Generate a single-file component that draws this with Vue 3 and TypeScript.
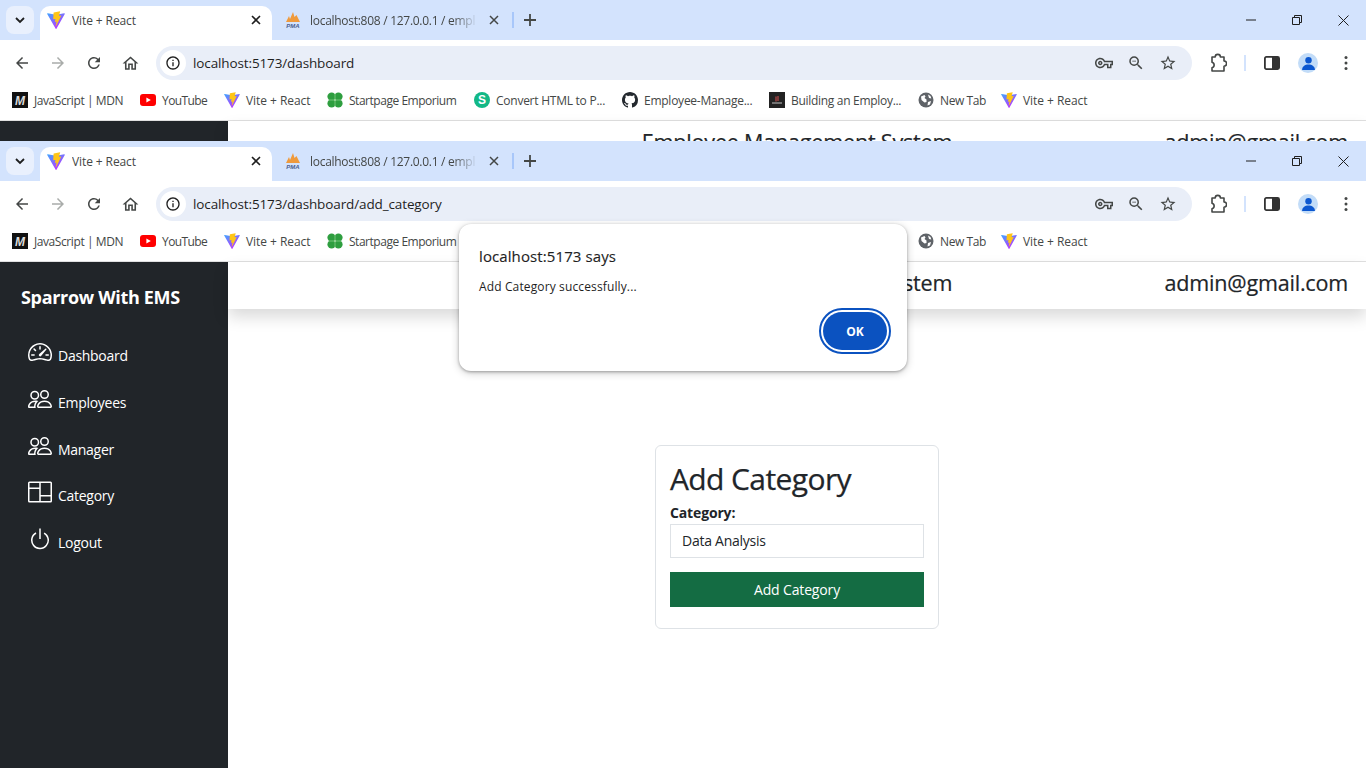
<script setup lang="ts">
const viteIcon = `<defs><linearGradient id="vg" x1="0" y1="0" x2="0.6" y2="1"><stop offset="0" stop-color="#41a5ff"/><stop offset="1" stop-color="#bd34fe"/></linearGradient></defs><path fill="url(#vg)" d="M29.9 6.1 16.7 29.6c-.3.5-1 .5-1.2 0L2.1 6.1c-.3-.5.2-1.2.7-1l13.2 2.3h.2l12.9-2.3c.6-.1 1 .5.8 1Z"/><path fill="#ffc517" d="M22.3 2 12.5 3.9c-.2 0-.3.2-.3.3l-.6 10.1c0 .2.2.4.4.4l2.7-.6c.3 0 .5.2.4.4l-.8 3.9c0 .3.2.5.5.4l1.7-.5c.3-.1.5.1.4.4l-1.3 6.2c-.1.4.4.6.7.3l.1-.2 7.9-15.8c.1-.3-.1-.6-.4-.5l-2.8.5c-.3 0-.5-.2-.4-.4l1.8-6.3c.1-.3-.1-.5-.4-.5Z"/>`
const viteView = '2 1.5 28 28.5'

const bookmarks = [
  { label: 'JavaScript | MDN', width: 90, track: -0.42, icon: `<rect x="0" y="0" width="16" height="16" fill="#111"/><text x="8" y="12.5" text-anchor="middle" font-size="12" font-weight="700" font-style="italic" fill="#ddd" font-family="Liberation Sans">M</text>` },
  { label: 'YouTube', width: 46, track: -0.58, icon: `<rect x="0" y="2" width="16" height="12" rx="3" fill="#f00"/><path d="M6.4 5.4v5.2L10.8 8z" fill="#fff"/>` },
  { label: 'Vite + React', width: 65, track: -0.05, view: viteView, icon: viteIcon },
  { label: 'Startpage Emporium', width: 109, track: -0.47, icon: `<g fill="#2e9e3f"><circle cx="4.6" cy="4.6" r="4.2"/><circle cx="11.4" cy="4.6" r="4.2"/><circle cx="4.6" cy="11.4" r="4.2"/><circle cx="11.4" cy="11.4" r="4.2"/></g><path d="M8 2v12M2 8h12" stroke="#8fd48f" stroke-width=".7"/>` },
  { label: 'Convert HTML to P...', width: 110, track: -0.25, icon: `<circle cx="8" cy="8" r="8" fill="#12b886"/><text x="8" y="12.2" text-anchor="middle" font-size="12" font-weight="700" fill="#fff" font-family="Liberation Sans">S</text>` },
  { label: 'Employee-Manage...', width: 109, track: -0.25, icon: `<path fill="#24292f" d="M8 0C3.58 0 0 3.58 0 8c0 3.54 2.29 6.53 5.47 7.59.4.07.55-.17.55-.38 0-.19-.01-.82-.01-1.49-2.01.37-2.53-.49-2.69-.94-.09-.23-.48-.94-.82-1.13-.28-.15-.68-.52-.01-.53.63-.01 1.08.58 1.23.82.72 1.21 1.87.87 2.33.66.07-.52.28-.87.51-1.07-1.78-.2-3.64-.89-3.64-3.95 0-.87.31-1.59.82-2.15-.08-.2-.36-1.02.08-2.12 0 0 .67-.21 2.2.82.64-.18 1.32-.27 2-.27s1.36.09 2 .27c1.53-1.04 2.2-.82 2.2-.82.44 1.1.16 1.92.08 2.12.51.56.82 1.27.82 2.15 0 3.07-1.87 3.75-3.65 3.95.29.25.54.73.54 1.48 0 1.07-.01 1.93-.01 2.2 0 .21.15.46.55.38A8.01 8.01 0 0 0 16 8c0-4.42-3.58-8-8-8z"/>` },
  { label: 'Building an Employ...', width: 111, track: -0.3, icon: `<rect width="16" height="16" fill="#222"/><path d="M7 4.5v5M9 4v5" stroke="#d85050" stroke-width="1"/><path d="M3 11h10" stroke="#aaa" stroke-width="1.2"/>` },
  { label: 'New Tab', width: 45, track: -0.4, icon: `<circle cx="8" cy="8" r="7.5" fill="#5f6368"/><path fill="#fff" d="M3 4.5 6.5 3l1 1.5-1 1.5 2 1.5V10l-2 .5L3.5 8zM10 2.5l2.5 1.5.8 2.5-2.3-.5zM10 10l3-1-1 3.5-2.5 1z"/>` },
  { label: 'Vite + React', width: 65, track: -0.05, view: viteView, icon: viteIcon },
]

const navItems = [
  { label: 'Dashboard', icon: 'speedometer' },
  { label: 'Employees', icon: 'people' },
  { label: 'Manager', icon: 'people' },
  { label: 'Category', icon: 'columns' },
  { label: 'Logout', icon: 'power' },
]

const navIcons: Record<string, string> = {
  speedometer: `<path d="M8 4a.5.5 0 0 1 .5.5V6a.5.5 0 0 1-1 0V4.5A.5.5 0 0 1 8 4zM3.732 5.732a.5.5 0 0 1 .707 0l.915.914a.5.5 0 1 1-.708.708l-.914-.915a.5.5 0 0 1 0-.707zM2 10a.5.5 0 0 1 .5-.5h1.586a.5.5 0 0 1 0 1H2.5A.5.5 0 0 1 2 10zm9.5 0a.5.5 0 0 1 .5-.5h1.5a.5.5 0 0 1 0 1H12a.5.5 0 0 1-.5-.5zm.754-4.246a.389.389 0 0 0-.527-.02L7.547 9.31a.91.91 0 1 0 1.302 1.258l3.434-4.297a.389.389 0 0 0-.029-.518z"/><path fill-rule="evenodd" d="M0 10a8 8 0 1 1 15.547 2.661c-.442 1.253-1.845 1.602-2.932 1.25C11.309 13.488 9.475 13 8 13c-1.474 0-3.31.488-4.615.911-1.087.352-2.49.003-2.932-1.25A7.988 7.988 0 0 1 0 10zm8-7a7 7 0 0 0-6.603 9.329c.203.575.923.876 1.68.63C4.397 12.533 6.358 12 8 12s3.604.532 4.923.96c.757.245 1.477-.056 1.68-.631A7 7 0 0 0 8 3z"/>`,
  people: `<path d="M15 14s1 0 1-1-1-4-5-4-5 3-5 4 1 1 1 1h8Zm-7.978-1A.261.261 0 0 1 7 12.996c.001-.264.167-1.03.76-1.72C8.312 10.629 9.282 10 11 10c1.717 0 2.687.63 3.24 1.276.593.69.758 1.457.76 1.72l-.008.002a.274.274 0 0 1-.014.002H7.022ZM11 7a2 2 0 1 0 0-4 2 2 0 0 0 0 4Zm3-2a3 3 0 1 1-6 0 3 3 0 0 1 6 0ZM6.936 9.28a5.88 5.88 0 0 0-1.23-.247A7.35 7.35 0 0 0 5 9c-4 0-5 3-5 4 0 .667.333 1 1 1h4.216A2.238 2.238 0 0 1 5 13c0-1.01.377-2.042 1.09-2.904.243-.294.526-.569.846-.816ZM4.92 10A5.493 5.493 0 0 0 4 13H1c0-.26.164-1.03.76-1.724.545-.636 1.492-1.256 3.16-1.275ZM1.5 5.5a3 3 0 1 1 6 0 3 3 0 0 1-6 0Zm3-2a2 2 0 1 0 0 4 2 2 0 0 0 0-4Z"/>`,
  columns: `<path d="M0 2a1 1 0 0 1 1-1h14a1 1 0 0 1 1 1v12a1 1 0 0 1-1 1H1a1 1 0 0 1-1-1V2zm8.5 0v8H15V2H8.5zm0 9v3H15v-3H8.5zM7.5 2H1v3h6.5V2zM1 14h6.5V6H1v8z"/>`,
  power: `<path d="M7.5 1v7h1V1h-1z"/><path d="M3 8.812a4.999 4.999 0 0 1 2.578-4.375l-.485-.874A6 6 0 1 0 11 3.616l-.501.865A5 5 0 1 1 3 8.812z"/>`,
}

const windows = [
  { url: 'localhost:5173/dashboard', full: false },
  { url: 'localhost:5173/dashboard/add_category', full: true },
]
</script>

<template>
  <div class="screen">
    <section v-for="win in windows" :key="win.url" class="window" :class="{ full: win.full }">
      <div class="tabstrip">
        <button class="tab-search">
          <svg width="12" height="12" viewBox="0 0 12 12"><path d="M2 4l4 4 4-4" fill="none" stroke="#1f1f1f" stroke-width="1.8"/></svg>
        </button>
        <div class="tab active">
          <svg class="favicon" :viewBox="viteView" v-html="viteIcon"></svg>
          <span class="tab-title">Vite + React</span>
          <svg class="tab-close" width="10" height="10" viewBox="0 0 10 10"><path d="M1 1l8 8M9 1l-8 8" stroke="#1f1f1f" stroke-width="1.6"/></svg>
        </div>
        <div class="tab inactive">
          <svg class="favicon" viewBox="0 0 16 16">
            <path d="M1 10 4 4l1 3L8 0l1.5 5L11.5 3 15 10z" fill="#ef9a3c"/>
            <text x="8" y="15.5" text-anchor="middle" font-size="6" font-weight="700" font-style="italic" fill="#4a5f8f" font-family="Liberation Sans">PMA</text>
          </svg>
          <span class="tab-title fade">localhost:808 / 127.0.0.1 / empl</span>
          <svg class="tab-close" width="10" height="10" viewBox="0 0 10 10"><path d="M1 1l8 8M9 1l-8 8" stroke="#444746" stroke-width="1.5"/></svg>
        </div>
        <span class="tab-sep"></span>
        <svg class="new-tab" width="12" height="12" viewBox="0 0 12 12"><path d="M6 0v12M0 6h12" stroke="#444746" stroke-width="1.8"/></svg>
        <div class="win-controls">
          <svg width="10" height="10" viewBox="0 0 10 10"><path d="M0 5h10" stroke="#1f1f1f"/></svg>
          <svg width="10" height="10" viewBox="0 0 10 10"><path d="M.5 2.5h7v7h-7zM2.5 2.5v-2h7v7h-2" fill="none" stroke="#1f1f1f"/></svg>
          <svg width="11" height="11" viewBox="0 0 11 11"><path d="M.5.5l10 10M10.5.5l-10 10" stroke="#1f1f1f"/></svg>
        </div>
      </div>

      <div class="toolbar">
        <svg class="tool" viewBox="0 0 24 24"><path d="M20 11H7.83l5.59-5.59L12 4l-8 8 8 8 1.41-1.41L7.83 13H20v-2z"/></svg>
        <svg class="tool off" viewBox="0 0 24 24"><path d="M12 4l-1.41 1.41L16.17 11H4v2h12.17l-5.58 5.59L12 20l8-8z"/></svg>
        <svg class="tool" viewBox="0 0 24 24"><path d="M17.65 6.35A7.95 7.95 0 0 0 12 4c-4.42 0-7.99 3.58-7.99 8s3.57 8 7.99 8c3.73 0 6.84-2.55 7.73-6h-2.08A5.99 5.99 0 0 1 12 18c-3.31 0-6-2.69-6-6s2.69-6 6-6c1.66 0 3.14.69 4.22 1.78L13 11h7V4l-2.35 2.35z"/></svg>
        <svg class="tool home" viewBox="0 0 24 24"><path d="M12 5.69l5 4.5V18h-2v-6H9v6H7v-7.81l5-4.5M12 3L2 12h3v8h6v-6h2v6h6v-8h3L12 3z"/></svg>
        <div class="omnibox">
          <span class="info-chip">
            <svg viewBox="0 0 24 24" width="16" height="16"><path d="M11 7h2v2h-2zm0 4h2v6h-2zm1-9C6.48 2 2 6.48 2 12s4.48 10 10 10 10-4.48 10-10S17.52 2 12 2zm0 18c-4.41 0-8-3.59-8-8s3.59-8 8-8 8 3.59 8 8-3.59 8-8 8z" fill="#1f1f1f"/></svg>
          </span>
          <span class="url">{{ win.url }}</span>
          <div class="omni-actions">
            <svg class="omni-icon" viewBox="0 0 24 24"><path d="M22 19h-6v-4h-2.68c-1.14 2.42-3.6 4-6.32 4-3.86 0-7-3.14-7-7s3.14-7 7-7c2.72 0 5.17 1.58 6.32 4H24v6h-2v4zm-4-2h2v-4h2v-2H11.94l-.23-.67C11.01 8.34 9.11 7 7 7c-2.76 0-5 2.24-5 5s2.24 5 5 5c2.11 0 4.01-1.34 4.71-3.33l.23-.67H18v4zM7 15c-1.65 0-3-1.35-3-3s1.35-3 3-3 3 1.35 3 3-1.35 3-3 3zm0-4c-.55 0-1 .45-1 1s.45 1 1 1 1-.45 1-1-.45-1-1-1z"/></svg>
            <svg class="omni-icon" viewBox="0 0 24 24"><path d="M15.5 14h-.79l-.28-.27A6.471 6.471 0 0 0 16 9.5 6.5 6.5 0 1 0 9.5 16c1.61 0 3.09-.59 4.23-1.57l.27.28v.79l5 4.99L20.49 19l-4.99-5zm-6 0C7.01 14 5 11.99 5 9.5S7.01 5 9.5 5 14 7.01 14 9.5 11.99 14 9.5 14zM7 9h5v1H7z"/></svg>
            <svg class="omni-icon" viewBox="0 0 24 24"><path d="M22 9.24l-7.19-.62L12 2 9.19 8.63 2 9.24l5.46 4.73L5.82 21 12 17.27 18.18 21l-1.63-7.03L22 9.24zM12 15.4l-3.76 2.27 1-4.28-3.32-2.88 4.38-.38L12 6.1l1.71 4.04 4.38.38-3.32 2.88 1 4.28L12 15.4z"/></svg>
          </div>
        </div>
        <div class="right-tools">
          <svg class="ext" width="18" height="20" viewBox="0 0 18 20"><path d="M3 4h3.2a2.6 2.6 0 0 1 5.2 0H15v4a2.6 2.6 0 0 1 0 5.2V18H3v-3.2a2.9 2.9 0 0 0 0-5.6z" fill="none" stroke="#444746" stroke-width="1.6" stroke-linejoin="round"/></svg>
          <span class="tool-sep"></span>
          <svg class="panel" width="16" height="14" viewBox="0 0 16 14"><rect x=".9" y=".9" width="14.2" height="12.2" rx="1.5" fill="none" stroke="#333" stroke-width="1.8"/><rect x="8" y="1" width="7" height="12" fill="#333"/></svg>
          <span class="avatar">
            <svg width="15" height="15" viewBox="0 0 14 14"><circle cx="7" cy="4" r="3" fill="#0b57d0"/><path d="M1 13c0-3.2 2.6-5 6-5s6 1.8 6 5z" fill="#0b57d0"/></svg>
          </span>
          <svg class="kebab" width="4" height="16" viewBox="0 0 4 16"><circle cx="2" cy="2.5" r="1.5"/><circle cx="2" cy="8" r="1.5"/><circle cx="2" cy="13.5" r="1.5"/></svg>
        </div>
      </div>

      <div class="bookmarks">
        <div v-for="(b, i) in bookmarks" :key="i" class="bookmark">
          <svg class="bm-icon" :viewBox="b.view ?? '0 0 16 16'" v-html="b.icon"></svg>
          <span :style="{ width: b.width + 'px', letterSpacing: b.track + 'px' }">{{ b.label }}</span>
        </div>
      </div>

      <div class="page">
        <aside class="sidebar">
          <template v-if="win.full">
            <h1 class="brand">Sparrow With EMS</h1>
            <nav class="nav">
              <a v-for="item in navItems" :key="item.label" class="nav-item">
                <svg class="nav-icon" viewBox="0 0 16 16" v-html="navIcons[item.icon]"></svg>
                <span>{{ item.label }}</span>
              </a>
            </nav>
          </template>
        </aside>
        <div class="content">
          <header class="topbar">
            <span></span>
            <span class="sys">Employee Management System</span>
            <span class="mail">admin@gmail.com</span>
          </header>
          <main v-if="win.full" class="main">
            <form class="card" @submit.prevent>
              <h2>Add Category</h2>
              <label for="cat">Category:</label>
              <input id="cat" type="text" value="Data Analysis" />
              <button type="submit">Add Category</button>
            </form>
          </main>
        </div>
      </div>

      <div v-if="win.full" class="dialog">
        <div class="dlg-title">localhost:5173 says</div>
        <div class="dlg-msg">Add Category successfully...</div>
        <div class="dlg-actions"><button class="ok">OK</button></div>
      </div>
    </section>
  </div>
</template>

<style>
html, body { margin: 0; overflow: hidden; background: #fff; }
</style>

<style scoped>
.screen { width: 1366px; height: 768px; overflow: hidden; font-family: "Open Sans", "Liberation Sans", sans-serif; color: #212529; }
.window { height: 141px; overflow: hidden; display: flex; flex-direction: column; position: relative; background: #fff; }
.window.full { height: 627px; }

.tabstrip { height: 40px; flex: none; background: #d3e3fd; display: flex; align-items: flex-end; position: relative; }
.tab-search { width: 28px; height: 28px; margin: 0 6px 6px 6px; border: 0; padding: 0; border-radius: 8px; background: #e9f0fd; display: flex; align-items: center; justify-content: center; }
.tab { height: 34px; display: flex; align-items: center; box-sizing: border-box; font-size: 12px; position: relative; color: #444746; }
.tab.active { width: 232px; background: #fff; border-radius: 10px 10px 0 0; padding: 0 11px 6px 7px; }
.tab.inactive { width: 232px; padding: 0 5px 6px 13px; }
.favicon { width: 18px; height: 18px; flex: none; margin-right: 7px; }
.tab.inactive .favicon { width: 16px; height: 16px; margin-right: 9px; }
.tab-title { flex: 1; white-space: nowrap; overflow: hidden; letter-spacing: -0.1px; }
.tab.inactive .tab-title { letter-spacing: -0.28px; }
.tab-title.fade { -webkit-mask-image: linear-gradient(90deg, #000 85%, transparent); mask-image: linear-gradient(90deg, #000 85%, transparent); }
.tab-close { flex: none; margin-left: 11px; }
.tab.active .tab-close { margin-left: 6px; }
.tab-sep { width: 2px; height: 16px; background: #a8c7fa; margin: 0 0 12px 8px; }
.new-tab { margin: 0 0 14px 10px; }
.win-controls { margin-left: auto; height: 40px; display: flex; align-items: center; gap: 36px; padding-right: 17px; align-self: flex-start; }

.toolbar { height: 46px; flex: none; background: #fff; border-radius: 8px 8px 0 0; display: flex; align-items: center; box-sizing: border-box; padding: 0 0 0 13px; position: relative; }
.tool { width: 18px; height: 18px; fill: #444746; flex: none; margin-right: 18px; }
.tool.home { width: 19px; height: 19px; margin-right: 0; }
.tool.off { fill: #a9acaa; }
.omnibox { margin-left: 16px; width: 1036px; flex: none; height: 34px; border-radius: 17px; background: #e9eef8; display: flex; align-items: center; box-sizing: border-box; padding-left: 4px; }
.info-chip { width: 26px; height: 26px; border-radius: 50%; background: #fff; display: flex; align-items: center; justify-content: center; flex: none; }
.url { margin-left: 7px; font-size: 13.5px; letter-spacing: -0.12px; color: #1f1f1f; white-space: nowrap; }
.omni-actions { margin-left: auto; display: flex; align-items: center; gap: 14px; padding-right: 15px; }
.omni-icon { width: 18px; height: 18px; fill: #444746; }
.right-tools { display: flex; align-items: center; margin-left: 17px; flex: none; }
.ext { flex: none; }
.tool-sep { width: 2px; height: 16px; background: #d3e3fd; margin: 0 18px 0 17px; }
.panel { margin-right: 18px; }
.avatar { width: 20px; height: 20px; border-radius: 50%; background: #c2dcf8; display: flex; align-items: center; justify-content: center; margin-right: 26px; }
.kebab { fill: #444746; }

.bookmarks { height: 35px; flex: none; box-sizing: border-box; background: #fff; border-bottom: 1px solid #e0e0e0; display: flex; align-items: center; padding: 0 0 6px 12px; gap: 16px; font-size: 12px; color: #444746; }
.bookmark { display: flex; align-items: center; gap: 6px; white-space: nowrap; }
.bm-icon { width: 16px; height: 16px; flex: none; }

.page { flex: 1; display: flex; min-height: 0; }
.sidebar { width: 228px; flex: none; background: #212529; color: #fff; box-sizing: border-box; padding: 22px 0 0 21px; }
.brand { margin: 0; font-size: 18px; line-height: 26px; font-weight: 700; letter-spacing: -0.32px; }
.nav { margin-top: 30px; display: flex; flex-direction: column; padding-left: 7px; }
.nav-item { height: 46.75px; display: flex; align-items: flex-start; font-size: 14px; letter-spacing: -0.28px; }
.nav-item span { margin-left: 6px; padding-top: 6px; line-height: 20px; }
.nav-icon { width: 24px; height: 24px; fill: #fff; flex: none; }

.content { flex: 1; min-width: 0; display: flex; flex-direction: column; }
.topbar { height: 47px; flex: none; box-sizing: border-box; display: grid; grid-template-columns: 1fr auto 1fr; align-items: center; padding: 0 18px 7px 0; background: #fff; box-shadow: 0 8px 16px rgba(0, 0, 0, .15); position: relative; font-size: 21.55px; -webkit-text-stroke: 0.2px #212529; color: #212529; }
.sys { transform: translateX(9px); letter-spacing: -0.2px; }
.mail { justify-self: end; letter-spacing: -0.2px; }
.main { flex: 1; display: flex; justify-content: center; align-items: flex-start; padding-top: 136px; }
.card { width: 284px; height: 184px; box-sizing: border-box; border: 1px solid #dee2e6; border-radius: 6px; padding: 14px 14px 0; display: flex; flex-direction: column; background: #fff; }
.card h2 { margin: 0; font-size: 30px; line-height: 38px; font-weight: 400; letter-spacing: -0.6px; -webkit-text-stroke: 0.25px #212529; }
.card label { margin-top: 5px; font-size: 14px; line-height: 19px; font-weight: 700; letter-spacing: -0.15px; }
.card input { margin-top: 2px; height: 34px; box-sizing: border-box; width: 100%; border: 1px solid #dee2e6; padding: 0 11px 2px; font: inherit; font-size: 14px; letter-spacing: -0.25px; color: #212529; outline: none; border-radius: 0; }
.card button { margin-top: 14px; height: 35px; border: 0; background: #146c43; color: #fff; font: inherit; font-size: 14px; letter-spacing: -0.15px; padding: 0; }

.dialog { position: absolute; left: 459px; top: 83px; width: 448px; height: 147px; box-sizing: border-box; background: #fff; border-radius: 12px; box-shadow: 0 1px 3px rgba(0, 0, 0, .3), 0 2px 8px rgba(0, 0, 0, .2); padding: 22px 20px 0; }
.dlg-title { font-size: 15px; line-height: 20px; font-weight: 500; letter-spacing: 0.1px; color: #1f1f1f; -webkit-text-stroke: 0.15px #1f1f1f; }
.dlg-msg { margin-top: 12px; font-size: 12px; line-height: 18px; color: #1f1f1f; letter-spacing: 0.13px; }
.dlg-actions { position: absolute; right: 20px; bottom: 21px; }
.ok { display: block; width: 64px; height: 38px; border-radius: 19px; border: 0; background: #0b52c0; color: #fff; font: inherit; font-size: 12px; font-weight: 700; outline: 2px solid #0b52c0; outline-offset: 2px; padding: 0; }
</style>
